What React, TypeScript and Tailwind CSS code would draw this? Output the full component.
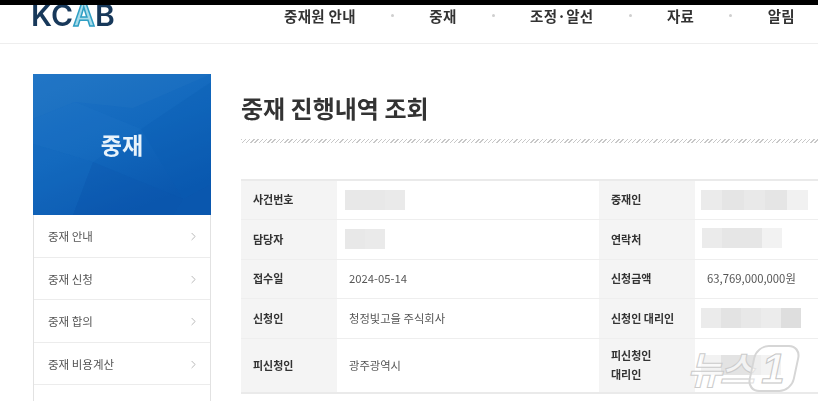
import { ChevronRight } from 'lucide-react';

const kr = "font-['Noto_Sans_CJK_KR','Noto_Sans',sans-serif]";

const navItems = ['중재원 안내', '중재', '조정·알선', '자료', '알림'];
const sideItems = ['중재 안내', '중재 신청', '중재 합의', '중재 비용계산'];

function Redacted({ shades, className }: { shades: string[]; className: string }) {
  return (
    <div className={`flex overflow-hidden ${className}`}>
      {shades.map((s, i) => (
        <div key={i} className="h-full flex-1" style={{ backgroundColor: s }} />
      ))}
    </div>
  );
}

function Th({ children }: { children: React.ReactNode }) {
  return <th className="bg-[#f4f4f4] pl-3 pr-1 text-left align-middle text-[11px] leading-[19px] font-bold text-[#333]">{children}</th>;
}

function Td({ children }: { children?: React.ReactNode }) {
  return <td className="pl-[12px] align-middle text-[11.3px] text-[#555]">{children}</td>;
}

function Banner() {
  return (
    <svg viewBox="0 0 178 141" className="absolute inset-0 h-full w-full" preserveAspectRatio="none">
      <defs>
        <linearGradient id="banner" x1="0" y1="0" x2="0.5" y2="1">
          <stop offset="0" stopColor="#1f74c6" />
          <stop offset="0.55" stopColor="#1268bd" />
          <stop offset="1" stopColor="#0a57ae" />
        </linearGradient>
      </defs>
      <rect width="178" height="141" fill="url(#banner)" />
      <polygon points="0,0 178,0 100,34 42,28 0,45" fill="#3a86c9" opacity="0.14" />
      <polygon points="178,8 178,110 150,125 108,55" fill="#0b5cb3" opacity="0.3" />
      <polygon points="42,28 108,55 60,88 0,70 0,45" fill="#2a7ccb" opacity="0.14" />
      <polygon points="60,88 150,125 140,141 40,141" fill="#0a52ac" opacity="0.25" />
      <polygon points="0,70 60,88 40,141 0,141" fill="#1a70c4" opacity="0.2" />
    </svg>
  );
}

function Watermark() {
  return (
    <div className="absolute left-[687px] top-[343px] flex h-[50px] w-[122px] items-center">
      <span className={`${kr} text-[38px] leading-none font-bold tracking-[-2.5px] text-white/60 italic [-webkit-text-stroke:1px_#cbcbcb]`}>뉴스</span>
      <div className="-ml-[1px] flex h-[47px] w-[46px] -skew-x-12 items-center justify-center rounded-[13px] border-2 border-[#d6d6d6] bg-white/40">
        <span className="text-[42px] leading-none font-bold text-white/70 [-webkit-text-stroke:1px_#c6c6c6] font-['Liberation_Sans',sans-serif]">1</span>
      </div>
    </div>
  );
}

export default function App() {
  return (
    <div className={`${kr} relative h-[401px] w-[818px] overflow-hidden bg-white`}>
      <div className="relative z-10 h-[5px] bg-black" />

      <div className="blur-[0.35px]">
        {/* header */}
        <header className="flex h-[39px] items-start border-b border-[#eeeeee]">
          <div className="-mt-[9px] ml-[31px] flex w-[210px] text-[30px] leading-[38px] font-semibold text-[#17385a] font-['Inter',sans-serif]">
            <span>KC</span>
            <span className="text-[#a8dcea] [-webkit-text-stroke:1.5px_#2f9fc4]">A</span>
            <span>B</span>
          </div>
          <nav className="ml-[43px] flex w-[511px] items-center justify-between text-[14.5px] leading-[21px] font-bold tracking-[0.5px] text-[#333]">
            {navItems.map((item, i) => (
              <div key={item} className="contents">
                {i > 0 && <span className="h-[3px] w-[3px] rounded-full bg-[#cfcfcf]" />}
                <span className="whitespace-nowrap tracking-[0.3px]">{item}</span>
              </div>
            ))}
          </nav>
        </header>

        <div className="flex pt-[30px] pl-[33px]">
          {/* sidebar */}
          <aside className="w-[178px] shrink-0">
            <div className="relative flex h-[141px] items-center justify-center">
              <Banner />
              <span className="relative text-[23px] font-bold text-[#e8f3fb]">중재</span>
            </div>
            <ul className="border-x border-[#e2e2e2]">
              {sideItems.map((item) => (
                <li key={item} className="flex h-[42.5px] items-center justify-between border-b border-[#ececec] pt-[2px] pr-[10px] pl-[14px] text-[11.5px] text-[#555]">
                  <span>{item}</span>
                  <ChevronRight className="h-[13px] w-[13px] text-[#aaa]" strokeWidth={1.5} />
                </li>
              ))}
              <li className="h-[42px] pt-[13px] pl-[14px] text-[11.5px] text-[#555]">중재 일정</li>
            </ul>
          </aside>

          {/* content */}
          <main className="ml-[30px] w-[577px] shrink-0">
            <h1 className="mt-[16px] h-[35px] text-[24px] leading-[35px] font-bold text-[#333]">중재 진행내역 조회</h1>
            <div className="mt-[14px] h-[4px] bg-[repeating-linear-gradient(135deg,#c8c8c8_0,#c8c8c8_1px,#ffffff_1px,#ffffff_3px)]" />

            <table className="mt-[36px] w-full table-fixed border-y-2 border-[#eaeaea]">
              <colgroup>
                <col className="w-[96px]" />
                <col className="w-[262px]" />
                <col className="w-[96px]" />
                <col />
              </colgroup>
              <tbody>
                <tr className="h-[39px] border-b border-[#eeeeee]">
                  <Th>사건번호</Th>
                  <Td><Redacted className="-ml-1 h-5 w-[60px]" shades={['#e8e8e8', '#e8e8e8', '#eaeaea']} /></Td>
                  <Th>중재인</Th>
                  <Td><Redacted className="-ml-[6px] h-5 w-[107px]" shades={['#ebebeb', '#e5e5e5', '#e9e9e9', '#e5e5e5', '#f1f1f1']} /></Td>
                </tr>
                <tr className="h-[40px] border-b border-[#eeeeee]">
                  <Th>담당자</Th>
                  <Td><Redacted className="-ml-1 -mt-[1px] h-5 w-[40px]" shades={['#e8e8e8', '#eaeaea']} /></Td>
                  <Th>연락처</Th>
                  <Td><Redacted className="-ml-[5px] -mt-[2px] h-5 w-[80px]" shades={['#ebebeb', '#e6e6e6', '#e6e6e6', '#f2f2f2']} /></Td>
                </tr>
                <tr className="h-[39px] border-b border-[#eeeeee]">
                  <Th>접수일</Th>
                  <Td>2024-05-14</Td>
                  <Th>신청금액</Th>
                  <Td>63,769,000,000원</Td>
                </tr>
                <tr className="h-[40px] border-b border-[#eeeeee]">
                  <Th>신청인</Th>
                  <Td>청정빛고을 주식회사</Td>
                  <Th>신청인 대리인</Th>
                  <Td><Redacted className="-ml-[6px] h-5 w-[100px]" shades={['#ebebeb', '#e3e3e3', '#e8e8e8', '#ececec', '#dedede']} /></Td>
                </tr>
                <tr className="h-[55px]">
                  <Th>피신청인</Th>
                  <Td>광주광역시</Td>
                  <Th>피신청인<br />대리인</Th>
                  <Td><Redacted className="-ml-[6px] h-5 w-[80px]" shades={['#f2f2f2', '#e3e3e3', '#e3e3e3', '#ececec']} /></Td>
                </tr>
              </tbody>
            </table>
          </main>
        </div>
      </div>

      <Watermark />
    </div>
  );
}
